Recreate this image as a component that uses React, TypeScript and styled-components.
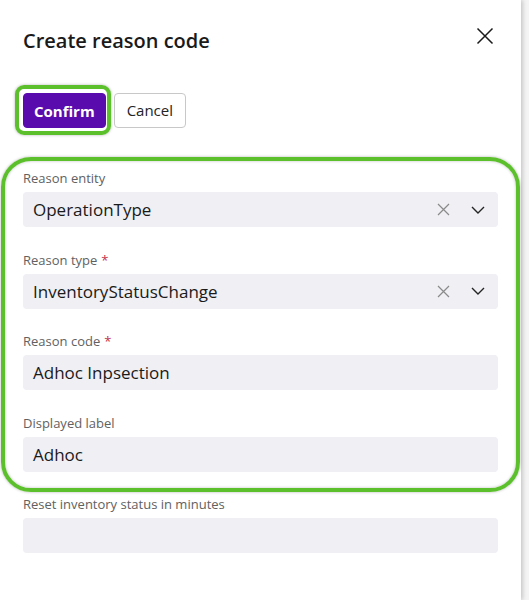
import React from "react";
import styled, { createGlobalStyle } from "styled-components";

const GlobalStyle = createGlobalStyle`
  html, body {
    margin: 0;
    padding: 0;
    background: #f4f4f4;
  }
  body {
    font-family: "Open Sans", "Noto Sans", sans-serif;
    color: #242424;
  }
`;

interface IField {
  label: string;
  value?: string;
  required?: boolean;
  select?: boolean;
}

const highlighted: IField[] = [
  { label: "Reason entity", value: "OperationType", select: true },
  { label: "Reason type", value: "InventoryStatusChange", required: true, select: true },
  { label: "Reason code", value: "Adhoc Inpsection", required: true },
  { label: "Displayed label", value: "Adhoc" },
];

const ClearIcon = () => (
  <svg width="13" height="13" viewBox="0 0 13 13">
    <path d="M1 1L12 12M12 1L1 12" stroke="#8a8a8a" strokeWidth="1.2" fill="none" />
  </svg>
);

const ChevronIcon = () => (
  <svg width="14" height="8" viewBox="0 0 14 8">
    <path d="M1 1L7 7L13 1" stroke="#242424" strokeWidth="1.4" fill="none" />
  </svg>
);

const FieldBlock: React.FC<{ field: IField }> = ({ field }) => {
  return (
    <Block>
      <Label>
        {field.label}
        {field.required && <Required>*</Required>}
      </Label>
      <Input>
        <Value>{field.value}</Value>
        {field.select && (
          <Actions>
            <ClearIcon />
            <ChevronIcon />
          </Actions>
        )}
      </Input>
    </Block>
  );
};

const App: React.FC = () => {
  return (
    <>
      <GlobalStyle />
      <Panel>
        <Header>
          <Title>Create reason code</Title>
          <CloseButton aria-label="Close">
            <svg width="18" height="18" viewBox="0 0 18 18">
              <path d="M1.5 1.5L16.5 16.5M16.5 1.5L1.5 16.5" stroke="#1a1a1a" strokeWidth="1.5" fill="none" />
            </svg>
          </CloseButton>
        </Header>
        <ButtonRow>
          <Highlight>
            <Button $primary>Confirm</Button>
          </Highlight>
          <Button>Cancel</Button>
        </ButtonRow>
        <FieldGroup>
          {highlighted.map((f) => (
            <FieldBlock key={f.label} field={f} />
          ))}
        </FieldGroup>
        <Rest>
          <FieldBlock field={{ label: "Reset inventory status in minutes" }} />
        </Rest>
      </Panel>
    </>
  );
};

export default App;

const Panel = styled.div`
  width: 521px;
  height: 600px;
  box-sizing: border-box;
  background: #fff;
  padding: 27px 23px 0;
  box-shadow: 2px 0 4px rgba(0, 0, 0, 0.18);
`;

const Header = styled.div`
  display: flex;
  align-items: flex-start;
  justify-content: space-between;
  height: 28px;
`;

const Title = styled.h1`
  margin: 0;
  font-size: 20px;
  line-height: 28px;
  font-weight: 600;
  color: #1a1a1a;
`;

const CloseButton = styled.button`
  border: none;
  background: none;
  padding: 0;
  margin: 0 4px 0 0;
  display: flex;
  cursor: pointer;
`;

const ButtonRow = styled.div`
  display: flex;
  align-items: center;
  gap: 3px;
  margin-top: 30px;
`;

const Highlight = styled.div`
  margin-left: -8px;
  padding: 4px 1px 3px 4px;
  border: 4px solid #5cc02c;
  border-radius: 9px;
  box-shadow: 0 0 3px rgba(0, 0, 0, 0.3);
  display: flex;
`;

const Button = styled.button<{ $primary?: boolean }>`
  height: 35px;
  padding: 0 ${(p) => (p.$primary ? 10 : 12)}px;
  border-radius: 4px;
  font-family: inherit;
  font-size: 15px;
  font-weight: ${(p) => (p.$primary ? 700 : 400)};
  color: ${(p) => (p.$primary ? "#fff" : "#242424")};
  background: ${(p) => (p.$primary ? "#5a0bae" : "#fff")};
  border: 1px solid ${(p) => (p.$primary ? "#5a0bae" : "#c8c8c8")};
  cursor: pointer;
`;

const FieldGroup = styled.div`
  margin: 22px -22px 0;
  padding: 9px 18px 16.5px;
  border: 4px solid #5cc02c;
  border-radius: 30px;
  box-shadow: 0 0 3px rgba(0, 0, 0, 0.3), inset 0 0 3px rgba(0, 0, 0, 0.25);
  display: flex;
  flex-direction: column;
  gap: 24.5px;
`;

const Rest = styled.div`
  margin-top: 4px;
`;

const Block = styled.div`
  display: flex;
  flex-direction: column;
  gap: 6px;
`;

const Label = styled.div`
  font-size: 13px;
  line-height: 16px;
  color: #616161;
`;

const Required = styled.span`
  color: #c4314b;
  margin-left: 4px;
`;

const Input = styled.div`
  height: 35px;
  border-radius: 4px;
  background: #efeff4;
  display: flex;
  align-items: center;
  justify-content: space-between;
  padding: 0 13px 0 10px;
`;

const Value = styled.span`
  font-size: 17px;
  color: #1a1a1a;
`;

const Actions = styled.div`
  display: flex;
  align-items: center;
  gap: 21px;
`;
